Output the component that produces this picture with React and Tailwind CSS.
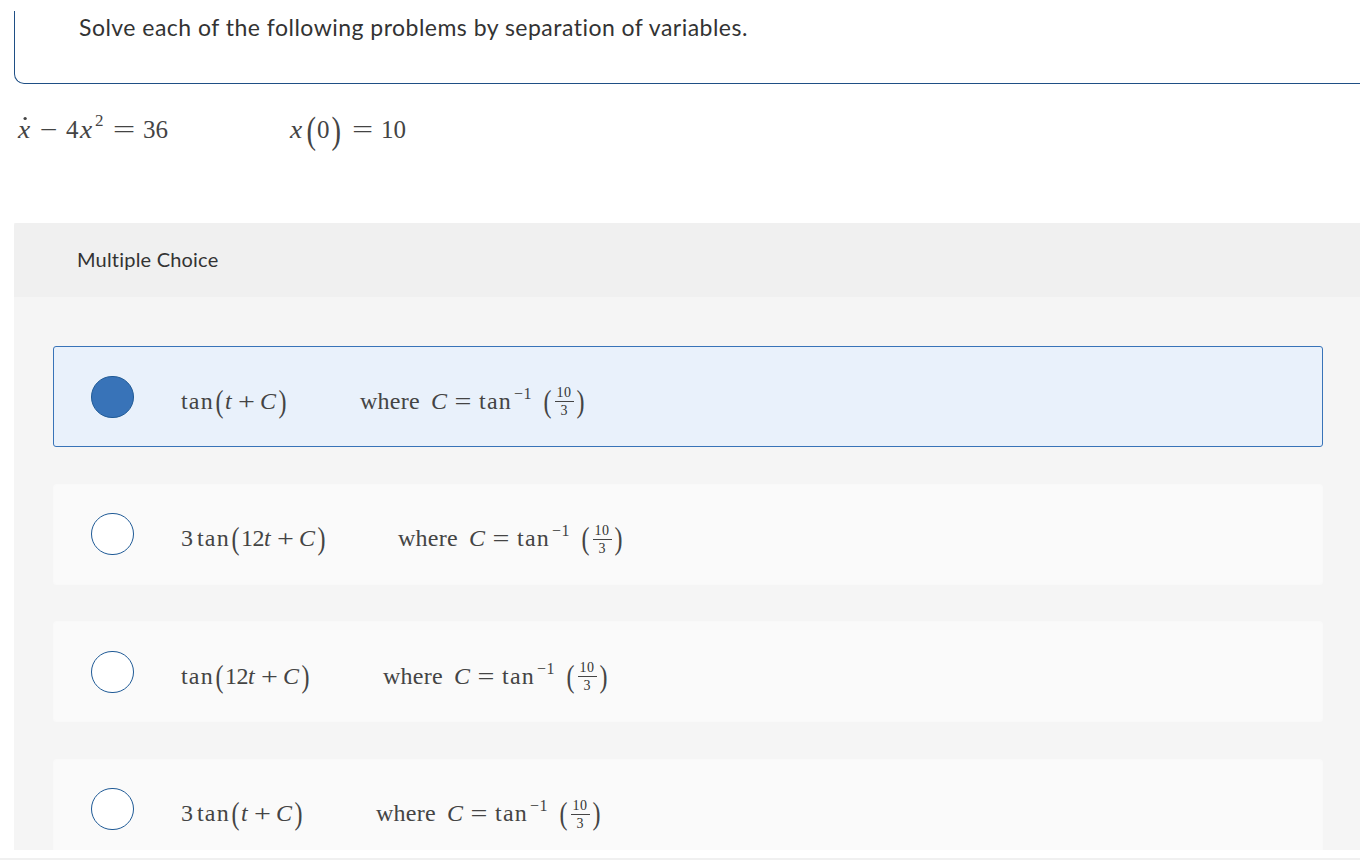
import React from 'react';

const serif = '"Liberation Serif", "DejaVu Serif", serif';

const I = ({ children, className = '' }) => <span className={`italic ${className}`}>{children}</span>;

// 연산자는 글꼴보다 넓게 그려져 있어서 가로로 늘림
const Op = ({ children, className = '' }) => (
  <span className={`inline-block text-center shrink-0 ${className}`}>{children}</span>
);

const Paren = ({ children, size = 'text-[32px] w-[11px]' }) => (
  <span className={`${size} inline-block text-center leading-none font-light scale-x-75 shrink-0`}>{children}</span>
);

const Tan = () => <span className="tracking-[1.2px] shrink-0">tan</span>;

const Fraction = () => (
  <span className="inline-flex flex-col items-center w-[22px] text-[14px] leading-[13px] font-medium text-[#333] shrink-0 relative top-[1px]">
    <span className="border-b border-[#444] px-[2px] pb-[2px] tracking-[.5px]">10</span>
    <span className="pt-[2px]">3</span>
  </span>
);

const Where = ({ left }) => (
  <span className="flex items-center" style={{ marginLeft: left }}>
    <span className="tracking-[.3px]">where</span>
    <I className="ml-[11px] w-[16px] tracking-[1px]">C</I>
    <Op className="w-[16px] ml-[8px] mr-[8px] scale-x-125">=</Op>
    <Tan />
    <span className="text-[16px] relative top-[-7px] ml-[2px] mr-[10px] tracking-[.5px]">−1</span>
    <Paren>(</Paren>
    <Fraction />
    <Paren>)</Paren>
  </span>
);

const choices = [
  { id: 1, pre: '', arg: 't', gap: 72, selected: true },
  { id: 2, pre: '3', arg: '12t', gap: 71 },
  { id: 3, pre: '', arg: '12t', gap: 72 },
  { id: 4, pre: '3', arg: 't', gap: 72 },
];

const Choice = ({ pre, arg, gap, selected }) => (
  <div
    className={`shrink-0 h-[101px] rounded-[3px] border flex items-center pl-[37px] ${
      selected ? 'bg-[#e9f1fb] border-[#3873b8]' : 'bg-[#fafafa] border-[#f9f9f9]'
    }`}
  >
    <span
      className={`w-[43px] h-[42px] rounded-full border border-[#1f5a96] shrink-0 ${
        selected ? 'bg-[#3873b8]' : 'bg-white'
      }`}
    />
    <div
      className="flex items-center ml-[47px] pt-[8px] text-[24px] text-[#444] leading-none"
      style={{ fontFamily: serif }}
    >
      <span className="flex items-center">
        {pre && <span className="w-[16px]">{pre}</span>}
        <Tan />
        <Paren>(</Paren>
        {arg === 't' ? (
          <I className="w-[8px]">t</I>
        ) : (
          <span className="w-[31px] tracking-[-.5px]">
            12<I>t</I>
          </span>
        )}
        <Op className="w-[17px] ml-[5px] mr-[5px] scale-x-125">+</Op>
        <I className="w-[17px] tracking-[1px]">C</I>
        <Paren>)</Paren>
      </span>
      <Where left={gap} />
    </div>
  </div>
);

export default function App() {
  return (
    <div className="h-[860px] overflow-hidden bg-white flex flex-col" style={{ fontFamily: 'Lato, sans-serif' }}>
      {/* 문제 지문 */}
      <div className="shrink-0 mt-[11px] ml-[14px] h-[73px] border-l border-b border-[#1f4f85] rounded-bl-[10px] pl-[64px] pt-[2px]">
        <p className="text-[23px] leading-[28px] tracking-[.48px] text-[#333]">
          Solve each of the following problems by separation of variables.
        </p>
      </div>

      <div
        className="shrink-0 h-[139px] pl-[18px] pt-[28px] flex items-start text-[25px] text-[#444]"
        style={{ fontFamily: serif }}
      >
        <span className="w-[272px] flex items-center h-[36px]">
          <span className="relative italic w-[14px] scale-x-110 origin-left">
            x
            <span className="absolute left-[5px] top-[6px] w-[3px] h-[3px] rounded-full bg-[#444]" />
          </span>
          <Op className="w-[17px] ml-[8px] mr-[9px] scale-x-125">−</Op>
          <span className="w-[14px]">4</span>
          <I className="w-[15px] scale-x-110 origin-left">x</I>
          <span className="text-[17px] w-[8px] relative top-[-9px]">2</span>
          <Op className="w-[22px] ml-[10px] mr-[8px] scale-x-[1.6]">=</Op>
          <span>36</span>
        </span>
        <span className="flex items-center h-[36px]">
          <I className="w-[15px] scale-x-110 origin-left">x</I>
          <Paren size="text-[38px] w-[12px]">(</Paren>
          <span className="w-[13px]">0</span>
          <Paren size="text-[38px] w-[12px]">)</Paren>
          <Op className="w-[21px] ml-[10px] mr-[8px] scale-x-[1.5]">=</Op>
          <span>10</span>
        </span>
      </div>

      {/* 보기 */}
      <div className="shrink-0 ml-[14px] h-[627px] bg-[#f5f5f5] overflow-hidden flex flex-col">
        <div className="shrink-0 h-[74px] bg-[#f0f0f0] rounded-tl-[3px] flex items-center pl-[63px] pb-[2px] text-[20px] tracking-[.2px] text-[#333]">
          Multiple Choice
        </div>
        <div className="pl-[39px] pr-[37px] pt-[49px] flex flex-col gap-[36.5px]">
          {choices.map(c => (
            <Choice key={c.id} {...c} />
          ))}
        </div>
      </div>

      <div className="shrink-0 mt-[8px] h-[2px] bg-[#f0f0f0]" />
    </div>
  );
}
